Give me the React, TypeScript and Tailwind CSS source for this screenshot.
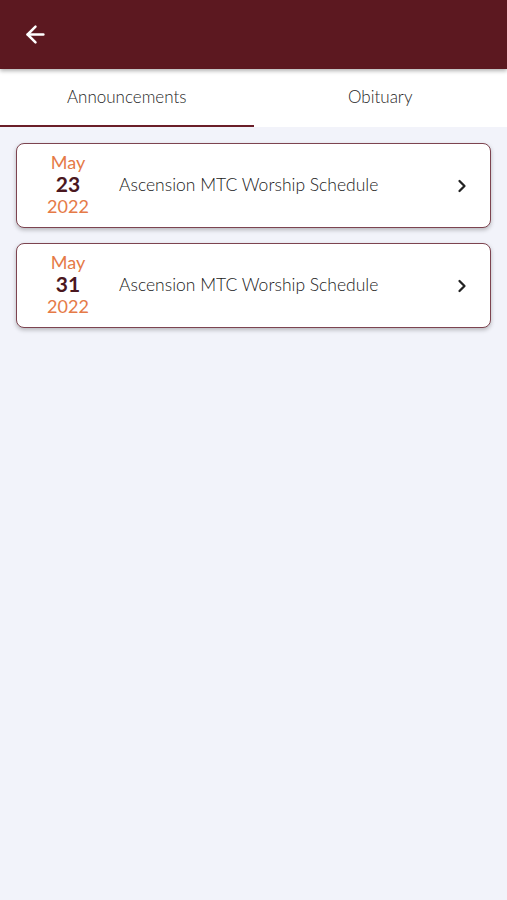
import { ArrowLeft, ChevronRight } from "lucide-react";

const items = [
  { month: "May", day: "23", year: "2022", title: "Ascension MTC Worship Schedule" },
  { month: "May", day: "31", year: "2022", title: "Ascension MTC Worship Schedule" },
];

const App = () => {
  return (
    <div
      className="min-h-[900px] w-full bg-[#f2f3fa]"
      style={{ fontFamily: "Lato, 'Noto Sans', sans-serif" }}
    >
      <header className="relative z-10 flex h-[69px] items-center bg-[#5c1820] pl-[22px] shadow-[0_2px_4px_rgba(0,0,0,0.3)]">
        <ArrowLeft size={27} strokeWidth={2.2} className="text-white" />
      </header>
      <nav className="flex h-[58px] bg-white">
        <div className="flex flex-1 items-center justify-center border-b-2 border-[#6a1e28] text-[17px] font-light text-[#1f1f1f]">
          Announcements
        </div>
        <div className="flex flex-1 items-center justify-center pb-[2px] text-[17px] font-light text-[#1f1f1f]">
          Obituary
        </div>
      </nav>
      <main className="flex flex-col gap-[15px] px-4 pt-4">
        {items.map((item, i) => (
          <div
            key={i}
            className="flex h-[85px] items-center rounded-lg border-[1.5px] border-[#7d4450] bg-white shadow-[0_2px_4px_rgba(0,0,0,0.25)]"
          >
            <div className="flex w-[102px] flex-col items-center pb-1 leading-[22px]">
              <span className="text-[18px] text-[#e57a47]">{item.month}</span>
              <span className="text-[21px] font-bold text-[#4a1720]">{item.day}</span>
              <span className="text-[18px] text-[#e57a47]">{item.year}</span>
            </div>
            <div className="flex-1 text-[17.5px] font-light text-[#1a1a1a]">{item.title}</div>
            <ChevronRight size={20} strokeWidth={2.75} className="mr-[18px] text-[#222]" />
          </div>
        ))}
      </main>
    </div>
  );
};

export default App;
